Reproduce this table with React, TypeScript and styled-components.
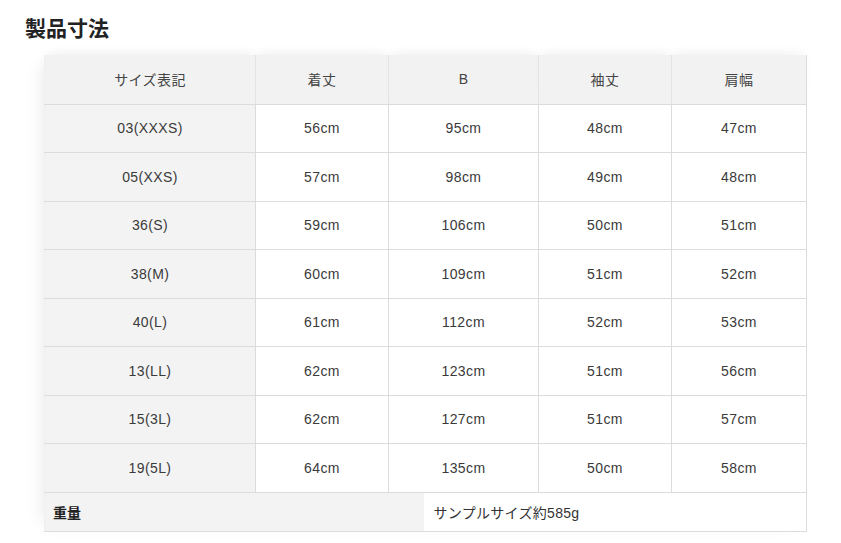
import styled, { createGlobalStyle } from 'styled-components';

const GlobalStyle = createGlobalStyle`
	body {
		margin: 0;
		background: #fff;
		font-family: 'Liberation Sans', 'Noto Sans CJK JP', sans-serif;
		color: #333;
	}
`;

const Page = styled.div`
	width: 841px;
	height: 543px;
	padding: 14px 0 0 25px;
	box-sizing: border-box;
	overflow: hidden;
`;

const Title = styled.h2`
	margin: 0 0 14px 0;
	font-size: 21px;
	line-height: 27px;
	font-weight: 700;
	color: #222;
	font-family: 'Noto Sans CJK JP', sans-serif;
`;

const TableWrap = styled.div`
	margin-left: 19px;
	width: 762px;
	box-shadow: -10px 0 18px -10px rgba(0, 0, 0, 0.1);
`;

const SizeTable = styled.table`
	width: 762px;
	border-collapse: collapse;
	table-layout: fixed;
	font-size: 14px;
	letter-spacing: 0.4px;
`;

const Th = styled.th`
	height: 48.5px;
	padding: 0;
	background: #f2f2f2;
	font-weight: 400;
	color: #444;
	text-align: center;
	border-bottom: 1px solid #dcdcdc;
	border-left: 1px solid #e4e4e4;
	box-shadow: 0 -6px 10px -4px rgba(0, 0, 0, 0.05);
	&:first-child {
		border-left: 1px solid #f0f0f0;
	}
	&:last-child {
		border-right: 1px solid #dcdcdc;
	}
`;

const Td = styled.td<{ $label?: boolean }>`
	height: 47.5px;
	padding: 0;
	text-align: center;
	background: ${props => (props.$label ? '#f3f3f3' : '#fff')};
	color: #3a3a3a;
	border-bottom: 1px solid #dcdcdc;
	border-left: 1px solid ${props => (props.$label ? '#f0f0f0' : '#dcdcdc')};
	&:last-child {
		border-right: 1px solid #dcdcdc;
	}
`;

const WeightTable = styled.table`
	width: 762px;
	border-collapse: collapse;
	table-layout: fixed;
	font-size: 14px;
`;

const WeightLabel = styled.td`
	height: 38px;
	padding: 0 0 0 8px;
	background: #f3f3f3;
	font-weight: 700;
	color: #222;
	font-family: 'Noto Sans CJK JP', sans-serif;
	border-bottom: 1px solid #dcdcdc;
	border-left: 1px solid #f0f0f0;
`;

const WeightValue = styled.td`
	height: 38px;
	padding: 0 0 0 10px;
	background: #fff;
	color: #333;
	letter-spacing: 0.3px;
	border-bottom: 1px solid #dcdcdc;
	border-right: 1px solid #dcdcdc;
`;

const headers = ['サイズ表記', '着丈', 'B', '袖丈', '肩幅'];

const rows = [
	['03(XXXS)', '56cm', '95cm', '48cm', '47cm'],
	['05(XXS)', '57cm', '98cm', '49cm', '48cm'],
	['36(S)', '59cm', '106cm', '50cm', '51cm'],
	['38(M)', '60cm', '109cm', '51cm', '52cm'],
	['40(L)', '61cm', '112cm', '52cm', '53cm'],
	['13(LL)', '62cm', '123cm', '51cm', '56cm'],
	['15(3L)', '62cm', '127cm', '51cm', '57cm'],
	['19(5L)', '64cm', '135cm', '50cm', '58cm'],
];

const widths = [211, 133, 150, 133, 135];

function App() {
	return (
		<Page>
			<GlobalStyle />
			<Title>製品寸法</Title>
			<TableWrap>
				<SizeTable>
					<colgroup>
						{widths.map((w, i) => (
							<col key={i} width={w} />
						))}
					</colgroup>
					<thead>
						<tr>
							{headers.map(h => (
								<Th key={h}>{h}</Th>
							))}
						</tr>
					</thead>
					<tbody>
						{rows.map(r => (
							<tr key={r[0]}>
								{r.map((c, i) => (
									<Td key={i} $label={i === 0}>
										{c}
									</Td>
								))}
							</tr>
						))}
					</tbody>
				</SizeTable>
				<WeightTable>
					<colgroup>
						<col width={379} />
						<col width={383} />
					</colgroup>
					<tbody>
						<tr>
							<WeightLabel>重量</WeightLabel>
							<WeightValue>サンプルサイズ約585g</WeightValue>
						</tr>
					</tbody>
				</WeightTable>
			</TableWrap>
		</Page>
	);
}

export default App;
